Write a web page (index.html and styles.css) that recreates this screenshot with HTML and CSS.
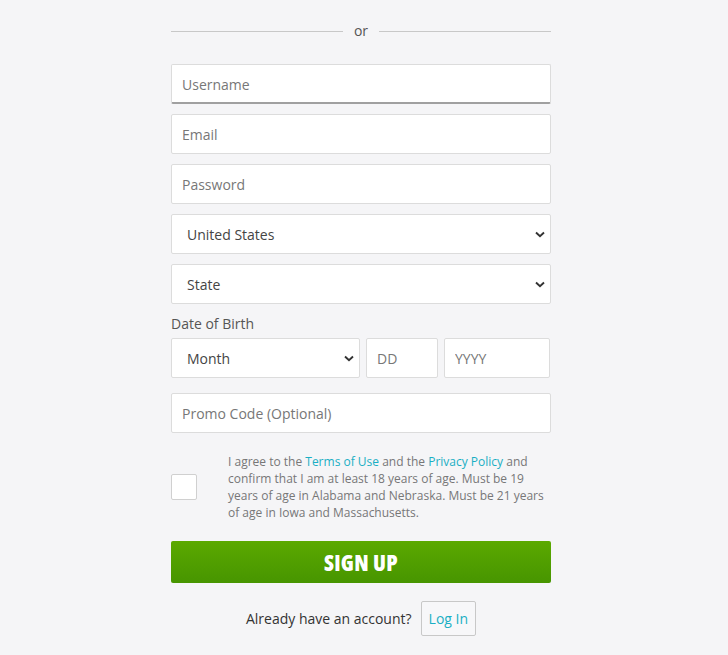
FILE: index.html
```html
<!DOCTYPE html>
<html>
<head>
<meta charset="utf-8">
<link rel="stylesheet" href="styles.css">
</head>
<body>
<div class="wrap">
  <form class="form">
    <div class="divider"><span class="line"></span><span class="or">or</span><span class="line"></span></div>
    <input class="field field-active" type="text" placeholder="Username">
    <input class="field" type="text" placeholder="Email">
    <input class="field" type="password" placeholder="Password">
    <select class="field select"><option>United States</option></select>
    <select class="field select"><option>State</option></select>
    <label class="dob-label">Date of Birth</label>
    <div class="dob">
      <select class="field select month"><option>Month</option></select>
      <input class="field dd" type="text" placeholder="DD">
      <input class="field yyyy" type="text" placeholder="YYYY">
    </div>
    <input class="field promo" type="text" placeholder="Promo Code (Optional)">
    <div class="agree">
      <span class="check"></span>
      <p class="agree-text">I agree to the <a href="#">Terms of Use</a> and the <a href="#">Privacy Policy</a> and confirm that I am at least 18 years of age. Must be 19 years of age in Alabama and Nebraska. Must be 21 years of age in Iowa and Massachusetts.</p>
    </div>
    <button class="signup" type="button">SIGN UP</button>
    <div class="login-row">
      <span class="login-text">Already have an account?</span>
      <button class="login-btn" type="button">Log In</button>
    </div>
  </form>
</div>
</body>
</html>
```
FILE: styles.css
```css
html, body {
  margin: 0;
  padding: 0;
  background: #f5f5f7;
  font-family: "Open Sans", "Liberation Sans", sans-serif;
}
.wrap {
  width: 386px;
  margin: 0 auto;
}
.form {
  width: 380px;
  padding-top: 20px;
  display: flex;
  flex-direction: column;
}
.divider {
  display: flex;
  align-items: center;
  height: 22px;
  gap: 11px;
  margin-bottom: 22px;
}
.line {
  flex: 1;
  height: 1px;
  background: #c8c8c8;
}
.or {
  font-size: 14px;
  color: #555;
  line-height: 22px;
  margin-top: 0;
}
.field {
  box-sizing: border-box;
  height: 40px;
  width: 100%;
  margin: 0 0 10px 0;
  border: 1px solid #dcdcdc;
  border-radius: 2px;
  background: #fff;
  padding: 0 10px;
  font-family: "Open Sans", "Liberation Sans", sans-serif;
  font-size: 14px;
  color: #444;
  outline: none;
}
.field::placeholder {
  color: #777;
}
.field-active {
  border-bottom: 2px solid #a0a0a0;
  padding-top: 2px;
}
.select {
  appearance: none;
  -webkit-appearance: none;
  padding-left: 15px;
  color: #444;
  background-image: url("data:image/svg+xml;utf8,<svg xmlns='http://www.w3.org/2000/svg' width='10' height='7' viewBox='0 0 10 7'><path d='M1 1.5 L5 5.2 L9 1.5' fill='none' stroke='%23333' stroke-width='1.9'/></svg>");
  background-repeat: no-repeat;
  background-position: right 5px center;
  background-size: 10px 7px;
}
.dob-label {
  font-size: 14px;
  color: #555;
  line-height: 20px;
  margin: 0 0 4px 0;
}
.dob {
  display: flex;
  gap: 6px;
  margin-bottom: 5px;
}
.dob .field { margin-bottom: 10px; }
.month { width: 189px; flex: none; }
.dd { width: 72px; flex: none; }
.yyyy { width: 106px; flex: none; }
.promo { margin-bottom: 20px; }
.agree {
  display: flex;
  align-items: center;
  margin-bottom: 20px;
}
.check {
  box-sizing: border-box;
  width: 26px;
  height: 26px;
  border: 1px solid #d0d0d0;
  border-radius: 2px;
  background: #fff;
  flex: none;
  margin-right: 31px;
}
.agree-text {
  margin: 0;
  font-size: 12px;
  line-height: 17px;
  color: #777;
  width: 323px;
}
.agree-text a {
  color: #1aafc4;
  text-decoration: none;
}
.signup {
  height: 42px;
  border: none;
  border-radius: 2px;
  background: linear-gradient(#5ba900, #479500);
  color: #fff;
  font-family: "Open Sans", "DejaVu Sans Condensed", sans-serif;
  font-weight: 800;
  font-stretch: 75%;
  font-size: 22px;
  letter-spacing: 0.3px;
  padding: 0;
  margin-bottom: 18px;
}
.login-row {
  display: flex;
  justify-content: center;
  align-items: center;
  gap: 9px;
}
.login-text {
  font-size: 14px;
  color: #333;
}
.login-btn {
  box-sizing: border-box;
  height: 35px;
  padding: 0 7px;
  border: 1px solid #c8c8c8;
  border-radius: 2px;
  background: #f7f7f9;
  color: #1aafc4;
  font-family: "Open Sans", "Liberation Sans", sans-serif;
  font-size: 14px;
}
```
